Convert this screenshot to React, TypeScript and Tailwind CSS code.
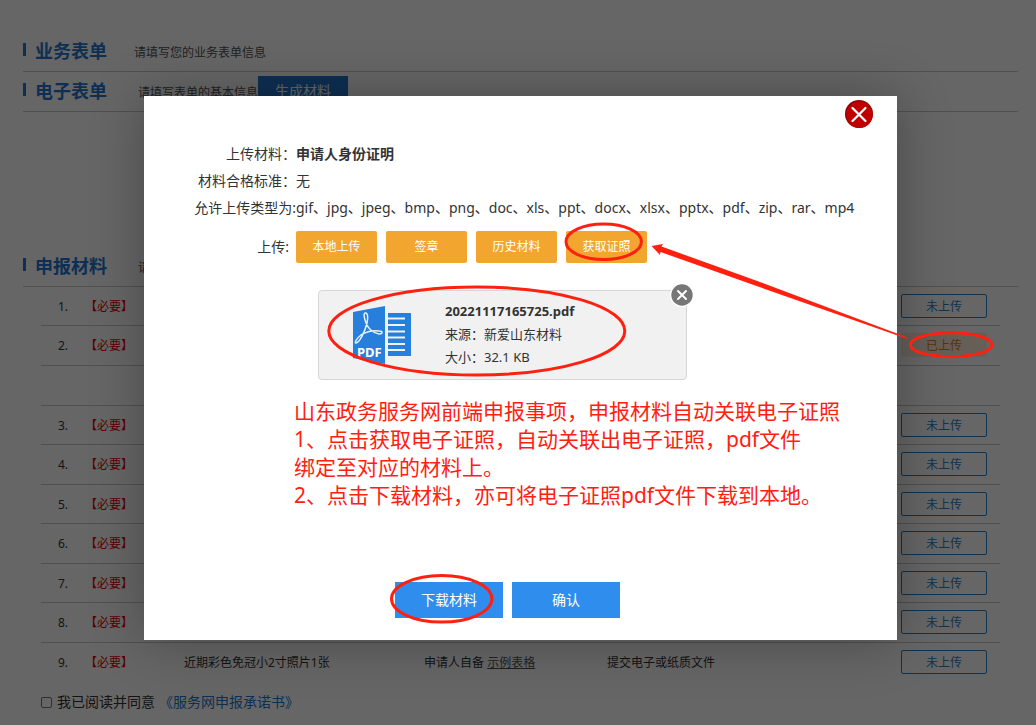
import { type ReactNode, useState } from "react";
import clsx from "clsx";

type Material = {
  id: number;
  uploaded?: boolean;
  name?: string;
  source?: string;
  sample?: string;
  form?: string;
};

const materials: Material[] = [
  { id: 1 },
  { id: 2, uploaded: true },
  { id: 3 },
  { id: 4 },
  { id: 5 },
  { id: 6 },
  { id: 7 },
  { id: 8 },
  {
    id: 9,
    name: "近期彩色免冠小2寸照片1张",
    source: "申请人自备",
    sample: "示例表格",
    form: "提交电子或纸质文件",
  },
];

const uploadActions = ["本地上传", "签章", "历史材料", "获取证照"];

const fileTypes =
  "gif、jpg、jpeg、bmp、png、doc、xls、ppt、docx、xlsx、pptx、pdf、zip、rar、mp4";

function SectionHeader({
  title,
  children,
}: {
  title: string;
  children: ReactNode;
}) {
  return (
    <header className="flex h-10 items-center border-b border-[#c8c8c8] pb-0.5">
      <span className="mr-[9px] mb-0.5 h-[13px] w-[3px] bg-[#2577cf]" />
      <h2 className="text-lg leading-6 font-bold text-[#2577cf]">{title}</h2>
      {children}
    </header>
  );
}

function MaterialRow({ item, index }: { item: Material; index: number }) {
  return (
    <tr
      className={clsx(
        index === 0 && "h-[38px]",
        index > 0 && (index % 2 === 0 ? "h-[39px]" : "h-10"),
        index < materials.length - 1 && "border-b border-[#c8c8c8]",
      )}
    >
      <td className="pt-0.5 text-center">{item.id}.</td>
      <td className="pt-0.5 text-[#e00000]">【必要】</td>
      <td className="pt-0.5">{item.name}</td>
      <td className="pt-0.5">
        {item.source}{" "}
        {item.sample && (
          <a href="#sample" className="text-[#555] underline">
            {item.sample}
          </a>
        )}
      </td>
      <td className="pt-0.5">{item.form}</td>
      <td>
        <button
          type="button"
          className={clsx(
            "block h-6 w-[86px] rounded-xs border pt-0.5 text-xs",
            item.uploaded
              ? "border-[#fdeedb] bg-[#fdeedb] text-[#e87a22]"
              : "border-[#2a7fc8] text-[#2a7fc8]",
          )}
        >
          {item.uploaded ? "已上传" : "未上传"}
        </button>
      </td>
    </tr>
  );
}

function MaterialTable() {
  return (
    <table className="w-full table-fixed border-collapse text-xs text-[#333]">
      <colgroup>
        <col className="w-11" />
        <col className="w-[99px]" />
        <col />
        <col className="w-[183px]" />
        <col className="w-[294px]" />
        <col className="w-[99px]" />
      </colgroup>
      <tbody>
        {materials.slice(0, 2).map((item, i) => (
          <MaterialRow key={item.id} item={item} index={i} />
        ))}
        <tr className="h-10 border-b border-[#c8c8c8]">
          <td colSpan={6} />
        </tr>
        {materials.slice(2).map((item, i) => (
          <MaterialRow key={item.id} item={item} index={i + 2} />
        ))}
      </tbody>
    </table>
  );
}

function PdfIcon() {
  return (
    <svg width="58" height="58" viewBox="0 0 58 58" aria-hidden="true">
      <path d="M0 6L32 0v58L0 52z" fill="#257fdb" />
      <path d="M35 7h23v43H35z" fill="#257fdb" />
      <path
        d="M35 12.5h17M35 19h17M35 25.5h17M35 31.5h17M35 38h17M35 44h17"
        stroke="#f1f1f1"
        strokeWidth="2.2"
      />
      <path
        d="M13 7c-3-1-2 5 0 10 3 7 8 10 13 11 4 0 4-3 0-3-6-1-13 1-18 4-4 3-7 8-5 8 3 0 9-11 11-20 1-5 1-9-1-10z"
        fill="none"
        stroke="#e6f1fc"
        strokeWidth="1.5"
      />
      <text
        x="4"
        y="51"
        fill="#fff"
        fontSize="13"
        fontWeight="700"
        fontFamily="Noto Sans, sans-serif"
      >
        PDF
      </text>
    </svg>
  );
}

function FileCard({ onRemove }: { onRemove: () => void }) {
  return (
    <div className="relative mt-[27px] ml-[174px] flex h-[90px] w-[369px] items-center rounded border border-[#d6d6d6] bg-[#f1f1f1] pl-[34px] text-[13px] leading-[23px]">
      <PdfIcon />
      <div className="ml-[34px] pb-0.5">
        <p className="font-bold">20221117165725.pdf</p>
        <p>来源：新爱山东材料</p>
        <p>大小：32.1 KB</p>
      </div>
      <button
        type="button"
        aria-label="删除文件"
        onClick={onRemove}
        className="absolute -top-2 -right-2 size-6"
      >
        <svg viewBox="0 0 24 24">
          <circle cx="12" cy="12" r="12" fill="#fff" />
          <circle cx="12" cy="12" r="10.7" fill="#777" />
          <path
            d="M8 8l8 8M16 8l-8 8"
            stroke="#fff"
            strokeWidth="2"
            strokeLinecap="round"
          />
        </svg>
      </button>
    </div>
  );
}

function FieldRow({ label, children }: { label: string; children: ReactNode }) {
  return (
    <div className="flex">
      <dt className="w-[152px] shrink-0 text-right">{label}</dt>
      <dd>{children}</dd>
    </div>
  );
}

function UploadDialog({ onClose }: { onClose: () => void }) {
  const [hasFile, setHasFile] = useState(true);

  return (
    <div
      role="dialog"
      aria-label="上传材料"
      className="relative w-[753px] bg-white pt-11 pb-[22px] text-sm text-[#333] shadow-[1px_1px_50px_rgba(0,0,0,0.3)]"
    >
      <button
        type="button"
        aria-label="关闭"
        onClick={onClose}
        className="absolute top-1 right-6 size-7"
      >
        <svg viewBox="0 0 28 28">
          <circle cx="14" cy="14" r="14" fill="#8f0000" />
          <circle cx="14.4" cy="14.6" r="13.3" fill="#c00000" />
          <path
            d="M7.5 8l13 13M20.5 8l-13 13"
            stroke="#fff"
            strokeWidth="2.2"
            strokeLinecap="round"
          />
        </svg>
      </button>

      <dl className="leading-[27px]">
        <FieldRow label="上传材料：">
          <b>申请人身份证明</b>
        </FieldRow>
        <FieldRow label="材料合格标准：">无</FieldRow>
        <FieldRow label="允许上传类型为:">{fileTypes}</FieldRow>
      </dl>

      <div className="mt-[10px] flex items-center">
        <span className="w-[152px] pr-[7px] text-right">上传:</span>
        <div className="flex gap-[9px]">
          {uploadActions.map((action) => (
            <button
              key={action}
              type="button"
              className="h-8 w-[81px] rounded-xs bg-[#f2a52f] text-xs text-white"
            >
              {action}
            </button>
          ))}
        </div>
      </div>

      {hasFile && <FileCard onRemove={() => setHasFile(false)} />}

      <div className="mt-[17px] ml-[150px] text-[21px] leading-7 text-[#ff2010]">
        <p>山东政务服务网前端申报事项，申报材料自动关联电子证照</p>
        <p>
          1、点击获取电子证照，自动关联出电子证照，pdf文件
          <br />
          绑定至对应的材料上。
        </p>
        <p>2、点击下载材料，亦可将电子证照pdf文件下载到本地。</p>
      </div>

      <div className="mt-[73px] flex gap-[9px] pl-[251px] text-white">
        <button type="button" className="h-9 w-[108px] bg-[#2f8eed]">
          下载材料
        </button>
        <button
          type="button"
          onClick={onClose}
          className="h-9 w-[108px] bg-[#2f8eed]"
        >
          确认
        </button>
      </div>
    </div>
  );
}

// Red marks that point out the steps, drawn over the page and the dialog
function Annotations() {
  return (
    <svg
      width="1036"
      height="725"
      viewBox="0 0 1036 725"
      className="pointer-events-none absolute top-0 left-0"
      aria-hidden="true"
    >
      <g fill="none" stroke="#ff2010" strokeWidth="3">
        <ellipse cx="603.7" cy="241.7" rx="37.7" ry="17.8" />
        <ellipse cx="476.8" cy="331" rx="148" ry="44" />
        <ellipse cx="441.7" cy="598.8" rx="50.2" ry="23.3" />
        <ellipse cx="951.2" cy="344.7" rx="40.8" ry="12" />
      </g>
      <path
        d="M651.5 246L663 244l-1.500 2.500L760 282l147.500 55.500v1.500L758 286.500 660.500 252l-.5 3z"
        fill="#ff2010"
      />
    </svg>
  );
}

function App() {
  const [open, setOpen] = useState(true);
  const [agreed, setAgreed] = useState(false);

  return (
    <div className="relative min-h-screen bg-white pt-8 font-['Noto_Sans','Noto_Sans_CJK_SC',sans-serif]">
      <main className="pr-[18px] pl-[23px]">
        <SectionHeader title="业务表单">
          <p className="ml-[27px] pt-1 text-xs text-[#555]">
            请填写您的业务表单信息
          </p>
        </SectionHeader>

        <SectionHeader title="电子表单">
          <p className="ml-[31px] pt-1 text-xs text-[#555]">
            请填写表单的基本信息
          </p>
          <button
            type="button"
            className="h-[30px] w-[90px] bg-[#2577cf] text-sm text-white"
          >
            生成材料
          </button>
        </SectionHeader>

        <div className="h-[135px]" />

        <SectionHeader title="申报材料">
          <p className="ml-[31px] pt-1 text-xs text-[#555]">请</p>
        </SectionHeader>

        <div className="pr-[18px] pl-[18px]">
          <MaterialTable />
          <div className="mt-[11px] flex items-center text-sm text-[#333]">
            <input
              id="agree"
              type="checkbox"
              checked={agreed}
              onChange={(e) => setAgreed(e.target.checked)}
              className="mr-[5px] size-[11px] appearance-none rounded-xs border border-[#777] checked:bg-[#2577cf]"
            />
            <label htmlFor="agree">我已阅读并同意</label>
            <a href="#promise" className="ml-1 text-[#2577cf]">
              《服务网申报承诺书》
            </a>
          </div>
        </div>
      </main>

      {open && (
        <div className="absolute inset-0 flex items-start justify-center bg-black/60 pt-24 pl-[5px]">
          <UploadDialog onClose={() => setOpen(false)} />
          <Annotations />
        </div>
      )}
    </div>
  );
}

export default App;
